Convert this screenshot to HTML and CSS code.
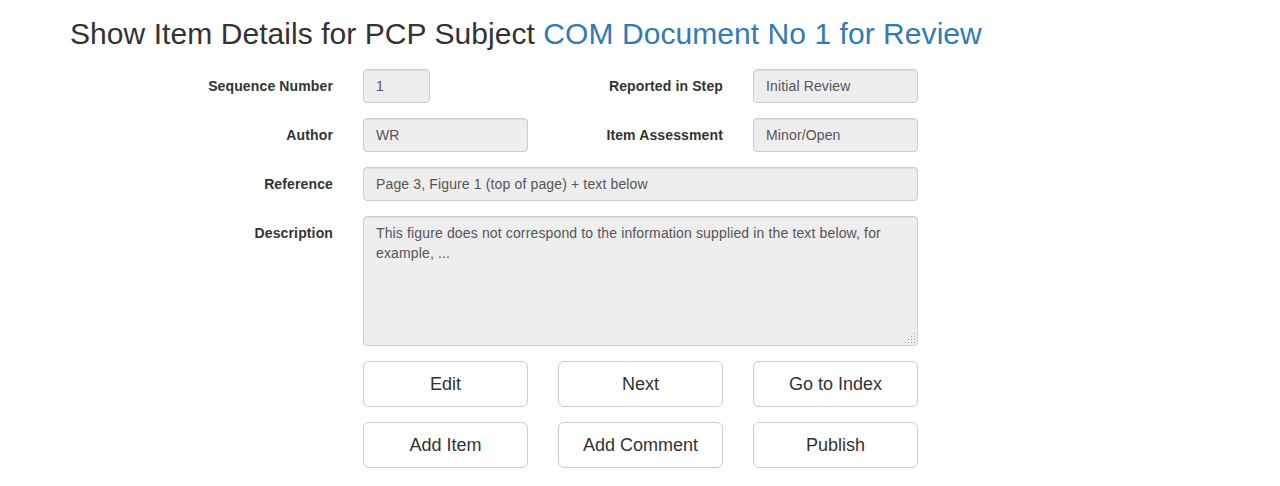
FILE: index.html
```html
<!DOCTYPE html>
<html>
<head>
<meta charset="utf-8">
<link rel="stylesheet" href="styles.css">
</head>
<body>
<div class="page">
  <h1 class="title">Show Item Details for PCP Subject <a class="subject" href="#">COM Document No 1 for Review</a></h1>
  <form class="form">
    <label class="lbl">Sequence Number</label>
    <div class="field"><input class="ctl ctl-short" type="text" value="1" readonly></div>
    <label class="lbl">Reported in Step</label>
    <div class="field"><input class="ctl" type="text" value="Initial Review" readonly></div>

    <label class="lbl">Author</label>
    <div class="field"><input class="ctl" type="text" value="WR" readonly></div>
    <label class="lbl">Item Assessment</label>
    <div class="field"><input class="ctl" type="text" value="Minor/Open" readonly></div>

    <label class="lbl">Reference</label>
    <div class="field span3"><input class="ctl" type="text" value="Page 3, Figure 1 (top of page) + text below" readonly></div>

    <label class="lbl lbl-top">Description</label>
    <div class="field span3"><textarea class="ctl ctl-area" readonly>This figure does not correspond to the information supplied in the text below, for example, ...</textarea></div>

    <div class="btn-cell"><button type="button" class="btn">Edit</button></div>
    <div class="btn-cell2"><button type="button" class="btn">Next</button></div>
    <div class="btn-cell2"><button type="button" class="btn">Go to Index</button></div>

    <div class="btn-cell"><button type="button" class="btn">Add Item</button></div>
    <div class="btn-cell2"><button type="button" class="btn">Add Comment</button></div>
    <div class="btn-cell2"><button type="button" class="btn">Publish</button></div>
  </form>
</div>
</body>
</html>
```
FILE: styles.css
```css
* { box-sizing: border-box; }
html, body { margin: 0; padding: 0; background: #fff; }
body {
  font-family: "Liberation Sans", Arial, sans-serif;
  font-size: 14px;
  line-height: 20px;
  color: #333;
}
.page { padding: 17px 0 0 70px; }
.title {
  margin: 0 0 19px 0;
  font-size: 30px;
  line-height: 33px;
  font-weight: normal;
  letter-spacing: 0.06px;
  color: #333;
}
.subject { color: #337ab7; text-decoration: none; }
.form {
  display: grid;
  grid-template-columns: 165px 165px 165px 165px;
  column-gap: 30px;
  row-gap: 15px;
  margin-left: 98px;
  align-items: center;
}
.lbl {
  font-weight: bold;
  text-align: right;
  letter-spacing: 0.13px;
  color: #333;
}
.lbl-top { align-self: start; padding-top: 7px; }
.span3 { grid-column: 2 / span 3; }
.ctl {
  display: block;
  width: 100%;
  height: 34px;
  padding: 6px 12px;
  font-family: inherit;
  font-size: 14px;
  line-height: 20px;
  letter-spacing: 0.14px;
  color: #555;
  background-color: #eee;
  border: 1px solid #ccc;
  border-radius: 4px;
  box-shadow: inset 0 1px 1px rgba(0,0,0,0.075);
  outline: none;
}
.ctl-short { width: 67px; }
.ctl-area {
  height: 130px;
  resize: none;
  background-image: url("data:image/svg+xml,%3Csvg xmlns='http://www.w3.org/2000/svg' width='11' height='11'%3E%3Cg fill='%23a0a0a0'%3E%3Crect x='9' y='0' width='1' height='1'/%3E%3Crect x='6' y='3' width='1' height='1'/%3E%3Crect x='9' y='3' width='1' height='1'/%3E%3Crect x='3' y='6' width='1' height='1'/%3E%3Crect x='6' y='6' width='1' height='1'/%3E%3Crect x='9' y='6' width='1' height='1'/%3E%3Crect x='0' y='9' width='1' height='1'/%3E%3Crect x='3' y='9' width='1' height='1'/%3E%3Crect x='6' y='9' width='1' height='1'/%3E%3Crect x='9' y='9' width='1' height='1'/%3E%3C/g%3E%3C/svg%3E");
  background-repeat: no-repeat;
  background-position: right 1px bottom 1px;
}
.btn-cell { grid-column: 2; }
.btn {
  display: block;
  width: 100%;
  height: 46px;
  padding: 10px 16px;
  font-family: inherit;
  font-size: 18px;
  line-height: 24px;
  color: #333;
  background: #fff;
  border: 1px solid #ccc;
  border-radius: 6px;
  cursor: pointer;
}
```
